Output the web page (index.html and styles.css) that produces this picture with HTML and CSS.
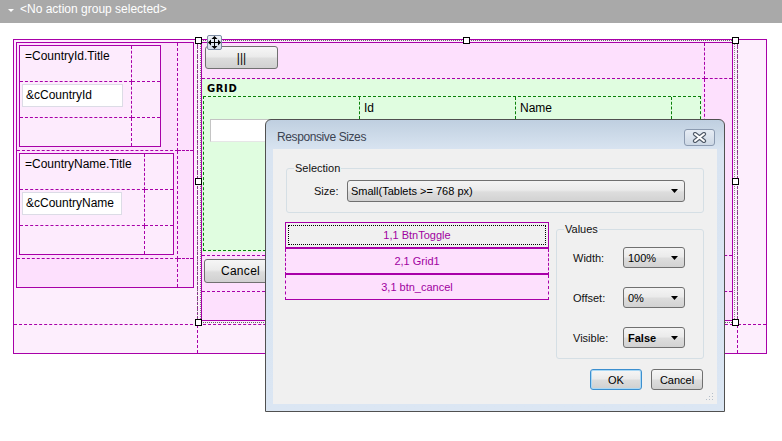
FILE: index.html
```html
<!DOCTYPE html>
<html>
<head>
<meta charset="utf-8">
<title>Responsive Sizes</title>
<link rel="stylesheet" href="styles.css">
</head>
<body>
<div class="page">
  <div class="actionbar"><span class="tri"></span><span>&lt;No action group selected&gt;</span></div>

  <div class="outer">
    <div class="oc-l dr db">
      <div class="ltable">
        <div class="lpad dr db">
          <div class="ntable nt1">
            <div class="title dr db">=CountryId.Title</div>
            <div class="db"></div>
            <div class="dr db"><div class="input in1">&amp;cCountryId</div></div>
            <div class="db"></div>
            <div class="dr"></div>
            <div></div>
          </div>
        </div>
        <div class="db"></div>
        <div class="lpad dr db">
          <div class="ntable nt2">
            <div class="title dr db">=CountryName.Title</div>
            <div class="db"></div>
            <div class="dr db"><div class="input in2">&amp;cCountryName</div></div>
            <div class="db"></div>
            <div class="dr"></div>
            <div></div>
          </div>
        </div>
        <div class="db"></div>
        <div class="dr"></div>
        <div></div>
      </div>
    </div>

    <div class="oc-m dr db">
      <div class="stable">
        <div class="dr db"><div class="btn-ui toggle">|||</div></div>
        <div class="db"></div>
        <div class="dr db">
          <div class="green">
            <div class="gridlbl">GRID</div>
            <div class="gbox">
              <div class="ghead">
                <div class="gh"></div>
                <div class="gh">Id</div>
                <div class="gh">Name</div>
                <div class="gh"></div>
              </div>
              <div class="ginput"></div>
            </div>
          </div>
        </div>
        <div class="db"></div>
        <div class="dr db"><div class="btn-ui cancel">Cancel</div></div>
        <div class="db"></div>
        <div class="dr"></div>
        <div></div>
      </div>
    </div>

    <div class="db"></div>
    <div class="dr"></div>
    <div class="dr"></div>
    <div></div>
  </div>

  <div class="sel"></div>
  <div class="handle" style="left:195px;top:37px"></div>
  <div class="handle" style="left:463px;top:37px"></div>
  <div class="handle" style="left:732px;top:37px"></div>
  <div class="handle" style="left:195px;top:178px"></div>
  <div class="handle" style="left:732px;top:178px"></div>
  <div class="handle" style="left:195px;top:319px"></div>
  <div class="handle" style="left:463px;top:319px"></div>
  <div class="handle" style="left:732px;top:319px"></div>
  <div class="move">
    <svg width="13" height="13" viewBox="0 0 13 13"><path d="M6.5 2v9M2 6.5h9" stroke="#000" stroke-width="1"/><path d="M6.5 0L3.5 3h6zM6.5 13L3.5 10h6zM0 6.5L3 3.5v6zM13 6.5L10 3.5v6z" fill="#000"/></svg>
  </div>

  <div class="dlg">
    <div class="dlg-title">Responsive Sizes</div>
    <div class="dlg-close">
      <svg width="15" height="11" viewBox="0 0 15 11"><path d="M3 2L12 9M12 2L3 9" stroke="#4f5a68" stroke-width="4.2" stroke-linecap="round"/><path d="M3 2L12 9M12 2L3 9" stroke="#fff" stroke-width="2" stroke-linecap="round"/></svg>
    </div>
    <div class="dlg-client">
      <div class="group sel-group">
        <span class="legend">Selection</span>
        <div class="size-row">
          <span class="lbl size-lbl">Size:</span>
          <div class="combo combo-size"><span>Small(Tablets &gt;= 768 px)</span><svg class="arrow" width="7" height="4" viewBox="0 0 7 4"><path d="M0 0h7L3.5 4z" fill="#000"/></svg></div>
        </div>
      </div>
      <div class="dlg-row">
        <div class="list">
          <div class="item item-first"><div class="focus">1,1 BtnToggle</div></div>
          <div class="item item-mid">2,1 Grid1</div>
          <div class="item item-last">3,1 btn_cancel</div>
        </div>
        <div class="group val-group">
          <span class="legend">Values</span>
          <div class="val-grid">
            <span class="lbl">Width:</span>
            <div class="combo combo-small"><span>100%</span><svg class="arrow" width="7" height="4" viewBox="0 0 7 4"><path d="M0 0h7L3.5 4z" fill="#000"/></svg></div>
            <span class="lbl">Offset:</span>
            <div class="combo combo-small"><span>0%</span><svg class="arrow" width="7" height="4" viewBox="0 0 7 4"><path d="M0 0h7L3.5 4z" fill="#000"/></svg></div>
            <span class="lbl">Visible:</span>
            <div class="combo combo-small"><span class="bold">False</span><svg class="arrow" width="7" height="4" viewBox="0 0 7 4"><path d="M0 0h7L3.5 4z" fill="#000"/></svg></div>
          </div>
        </div>
      </div>
      <div class="dlg-buttons">
        <div class="btn-ui dbtn ok">OK</div>
        <div class="btn-ui dbtn">Cancel</div>
      </div>
      <svg class="grip" width="9" height="9" viewBox="0 0 9 9"><g fill="#b4bec9"><rect x="7" y="1" width="1" height="1"/><rect x="4" y="4" width="1" height="1"/><rect x="7" y="4" width="1" height="1"/><rect x="1" y="7" width="1" height="1"/><rect x="4" y="7" width="1" height="1"/><rect x="7" y="7" width="1" height="1"/></g></svg>
    </div>
  </div>
</div>
</body>
</html>
```

FILE: styles.css
```css
* { box-sizing: border-box; }
html, body { margin: 0; padding: 0; background: #fff; }
body {
  font-family: "Liberation Sans", Arial, sans-serif;
  font-size: 12px;
  color: #000;
}
.page { position: relative; width: 782px; height: 441px; overflow: hidden; }

/* action bar */
.actionbar {
  height: 23px;
  background: #a9a9a9;
  color: #fff;
  display: flex;
  align-items: flex-start;
  padding: 2px 0 0 8px;
  line-height: 14px;
}
.tri {
  width: 0; height: 0;
  border-left: 3px solid transparent;
  border-right: 3px solid transparent;
  border-top: 3px solid #fff;
  margin: 7px 6px 0 0;
}

/* generic dashed cell borders */
.dr { border-right: 1px dashed #a800a8; }
.db { border-bottom: 1px dashed #a800a8; }

/* outer table */
.outer {
  margin: 16px 0 0 13px;
  width: 754px;
  height: 315px;
  border: 1px solid #a800a8;
  background: #fdeefd;
  display: grid;
  grid-template-columns: 184px 540px 28px;
  grid-template-rows: 285px 28px;
}
.oc-l { padding: 2px 0 0 2px; }
.oc-m { padding: 2px 0 0 3px; }

/* left table */
.ltable {
  width: 178px;
  height: 246px;
  border: 1px solid #a800a8;
  background: #fde0fd;
  display: grid;
  grid-template-columns: 161px 15px;
  grid-template-rows: 108px 108px 28px;
}
.lpad { padding: 2px 0 0 2px; }
.ntable {
  height: 102px;
  border: 1px solid #a800a8;
  background: #fdebfd;
  display: grid;
  grid-template-rows: 36px 36px 28px;
}
.nt1 { width: 142px; grid-template-columns: 112px 28px; }
.nt2 { width: 155px; grid-template-columns: 125px 28px; }
.title { padding: 3px 0 0 5px; line-height: 14px; white-space: nowrap; }
.input {
  margin: 2px 0 0 2px;
  height: 23px;
  background: #fff;
  border: 1px solid #dcdce6;
  padding-left: 3px;
  line-height: 21px;
  white-space: nowrap;
}
.in1 { width: 101px; }
.in2 { width: 100px; }

/* selected table */
.stable {
  width: 532px;
  height: 279px;
  border: 1px solid #a800a8;
  background: #fde0fd;
  display: grid;
  grid-template-columns: 503px 27px;
  grid-template-rows: 36px 177px 36px 28px;
}
.btn-ui {
  border: 1px solid #707070;
  border-radius: 3px;
  background: linear-gradient(#f6f6f6, #ebebeb 45%, #dcdcdc 55%, #d0d0d0);
  display: flex;
  align-items: center;
  justify-content: center;
}
.toggle { margin: 3px 0 0 3px; width: 73px; height: 23px; }
.cancel { margin: 3px 0 0 2px; width: 73px; height: 24px; letter-spacing: 0.3px; }

.green {
  width: 500px;
  height: 173px;
  background: #e0fde0;
  padding-left: 1px;
}
.gridlbl {
  font-family: "DejaVu Sans", "Liberation Sans", sans-serif;
  font-weight: bold;
  font-size: 10px;
  letter-spacing: 0.6px;
  padding: 2px 0 0 4px;
  height: 17px;
  line-height: 15px;
}
.gbox {
  width: 498px;
  height: 155px;
  border: 1px dashed #0a800a;
}
.ghead {
  display: grid;
  grid-template-columns: 156px 156px 156px 28px;
  height: 22px;
}
.gh {
  border-right: 1px dashed #0a800a;
  line-height: 22px;
  padding-left: 4px;
}
.gh:last-child { border-right: 0; }
.ginput {
  margin-left: 6px;
  width: 145px;
  height: 23px;
  background: #fff;
  border: 1px solid #c4c4c4;
  border-right-color: #e6e6e6;
  border-bottom-color: #e6e6e6;
}

/* selection overlays */
.sel {
  position: absolute;
  left: 197px;
  top: 40px;
  width: 541px;
  height: 283px;
  border: 1px dotted #666;
}
.sel::before {
  content: "";
  position: absolute;
  left: 2px; right: 2px; top: -1px; bottom: -1px;
  border-left: 1px dotted #888;
  border-right: 1px dotted #888;
}
.handle {
  position: absolute;
  width: 7px;
  height: 7px;
  background: #fff;
  border: 1px solid #000;
}
.move {
  position: absolute;
  left: 207px;
  top: 35px;
  width: 15px;
  height: 15px;
  border: 1px solid #7d8ca3;
  border-radius: 2px;
  background: linear-gradient(#eef2f7, #d3dce8);
  display: flex;
  align-items: center;
  justify-content: center;
}
.move svg { display: block; }

/* dialog */
.dlg {
  position: absolute;
  left: 265px;
  top: 119px;
  width: 460px;
  height: 293px;
  border: 1px solid #505050;
  border-radius: 6px 6px 0 0;
  background: linear-gradient(#bfcfe0 0, #cfdcea 18px, #d9e4f1 30px, #dbe6f3 100%);
  padding: 0 7px 7px 7px;
  display: flex;
  flex-direction: column;
}
.dlg-title {
  height: 29px;
  padding: 5px 0 0 4px;
  line-height: 24px;
  font-size: 12px;
  letter-spacing: -0.4px;
  color: #3c4452;
}
.dlg-close {
  position: absolute;
  left: 418px;
  top: 9px;
  width: 31px;
  height: 17px;
  border: 1px solid #8b9ab0;
  border-radius: 3px;
  background: linear-gradient(#e6ecf4, #cdd8e5);
  display: flex;
  align-items: center;
  justify-content: center;
}
.dlg-close svg { display: block; }
.dlg-client {
  position: relative;
  flex: 1;
  background: #f0f0f0;
  padding: 19px 0 0 13px;
  font-size: 11px;
}
.group {
  position: relative;
  border: 1px solid #d5dfe5;
  border-radius: 3px;
}
.legend {
  position: absolute;
  top: -7px;
  left: 7px;
  padding: 0 1px;
  line-height: 13px;
  background: #f0f0f0;
  color: #111;
}
.sel-group {
  width: 418px;
  height: 45px;
  padding: 11px 0 0 27px;
}
.size-row { display: flex; align-items: center; }
.lbl { color: #111; }
.size-lbl { width: 33px; }
.combo {
  border: 1px solid #707070;
  border-radius: 3px;
  background: linear-gradient(#f4f4f4, #ebebeb 45%, #dddddd 55%, #d2d2d2);
  display: flex;
  align-items: center;
  justify-content: space-between;
  white-space: nowrap;
}
.combo-size { width: 338px; height: 22px; padding: 0 6px 0 3px; }
.combo-small { width: 62px; height: 21px; padding: 0 6px 0 4px; }
.arrow { display: block; }
.bold { font-weight: bold; }

.dlg-row {
  display: flex;
  align-items: flex-start;
  margin: 9px 0 0 -1px;
}
.list { width: 264px; color: #a000a0; }
.item {
  height: 26px;
  display: flex;
  align-items: center;
  justify-content: center;
}
.item-first {
  height: 27px;
  border: 1px solid #a800a8;
  border-bottom-width: 2px;
  padding: 2px;
}
.focus {
  width: 100%;
  height: 100%;
  border: 1px dotted #000;
  display: flex;
  align-items: center;
  justify-content: center;
}
.item-mid {
  background: #fde0fd;
  border-left: 1px dashed #a800a8;
  border-right: 1px dashed #a800a8;
  border-bottom: 2px solid #a800a8;
}
.item-last {
  height: 25px;
  background: #fde0fd;
  border-left: 1px dashed #a800a8;
  border-right: 1px dashed #a800a8;
  border-bottom: 1px solid #a800a8;
}
.val-group {
  margin: 7px 0 0 7px;
  width: 148px;
  height: 130px;
  padding: 17px 0 0 16px;
}
.val-grid {
  display: grid;
  grid-template-columns: 50px 62px;
  grid-auto-rows: 21px;
  row-gap: 19px;
  align-items: center;
}
.dlg-buttons {
  display: flex;
  justify-content: flex-end;
  gap: 9px;
  margin: 10px 14px 0 0;
}
.dbtn { width: 52px; height: 21px; font-size: 11px; }
.ok {
  border-color: #3c8fcf;
  box-shadow: inset 0 0 0 1px #a9d8f5;
}
.grip { position: absolute; right: 3px; bottom: 3px; display: block; }
```
